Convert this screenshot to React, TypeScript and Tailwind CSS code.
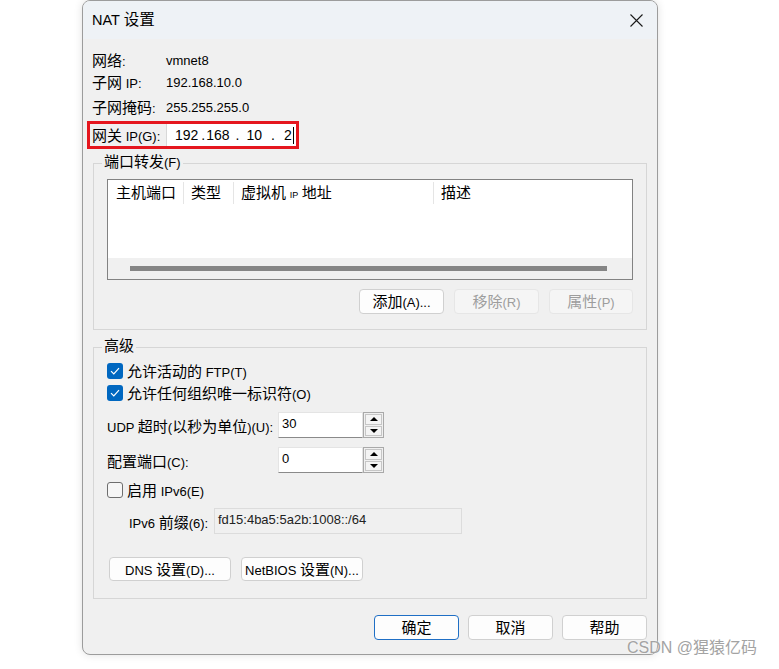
import React from "react";

// CJK runs are drawn a bit larger than the Latin text, as in the Windows dialog
const cjkRun = /([\u2E80-\u9FFF\uFF00-\uFFEF]+)/;

const T = ({ s }: { s: string }) => {
  return (
    <>
      {s.split(cjkRun).map((part, i) =>
        cjkRun.test(part) ? (
          <span key={i} className="text-[15px]">
            {part}
          </span>
        ) : (
          <span key={i}>{part}</span>
        )
      )}
    </>
  );
};

const Button = ({
  label,
  w,
  h = "h-[25px]",
  disabled = false,
  primary = false,
}: {
  label: string;
  w: string;
  h?: string;
  disabled?: boolean;
  primary?: boolean;
}) => {
  return (
    <div
      className={
        "flex items-center justify-center rounded-[4px] border " +
        w +
        " " +
        h +
        (disabled
          ? " border-[#e6e6e6] bg-[#f5f5f5] text-[#9d9d9d]"
          : primary
          ? " border-[#1f6fc5] bg-[#fdfdfd] text-black"
          : " border-[#d0d0d0] bg-[#fdfdfd] text-black")
      }
    >
      <span className="leading-none whitespace-nowrap">
        <T s={label} />
      </span>
    </div>
  );
};

const CheckBox = ({ checked, label }: { checked: boolean; label: string }) => {
  return (
    <div className="flex items-center h-[18px]">
      {checked ? (
        <div className="w-[16px] h-[16px] rounded-[3px] bg-[#0067c0] flex items-center justify-center">
          <svg width="10" height="8" viewBox="0 0 10 8" fill="none">
            <path d="M1 4.2 L3.8 7 L9 1.2" stroke="white" strokeWidth="1.2" />
          </svg>
        </div>
      ) : (
        <div className="w-[16px] h-[16px] rounded-[3px] border border-[#6e6e6e] bg-[#f6f6f6]" />
      )}
      <span className="ml-[4px] leading-none whitespace-nowrap">
        <T s={label} />
      </span>
    </div>
  );
};

const Spin = ({ value }: { value: string }) => {
  return (
    <div className="flex h-[26px]">
      <div className="w-[85px] bg-white border border-[#e4e4e4] border-b-[#8a8a8a] pl-[3px] pt-[4px] leading-none">
        {value}
      </div>
      <div className="w-[21px] border border-[#a9a9a9] p-px flex flex-col gap-px bg-[#f0f0f0]">
        <div className="flex-1 border border-[#c6c6c6] bg-[#f4f4f4] flex items-center justify-center">
          <div className="w-0 h-0 border-x-[4px] border-x-transparent border-b-[4px] border-b-black" />
        </div>
        <div className="flex-1 border border-[#c6c6c6] bg-[#f4f4f4] flex items-center justify-center">
          <div className="w-0 h-0 border-x-[4px] border-x-transparent border-t-[4px] border-t-black" />
        </div>
      </div>
    </div>
  );
};

const App = () => {
  return (
    <div className="relative w-[779px] h-[669px] bg-white overflow-hidden font-['Liberation_Sans','Noto_Sans_CJK_SC',sans-serif] text-[13px] text-black">
      <div className="ml-[82px] w-[576px] h-[655px] rounded-[8px] border border-[#9c9c9c] bg-[#f0f0f0] overflow-hidden shadow-[0_0_8px_rgba(0,0,0,0.12)] flex flex-col">
        {/* title bar */}
        <div className="h-[38px] bg-[#eef2f6] flex items-center justify-between pl-[9px] pr-[14px]">
          <span className="text-[14.5px] leading-none">
            NAT <span className="text-[15.5px]">设置</span>
          </span>
          <svg width="13" height="13" viewBox="0 0 13 13">
            <path d="M0.5 0.5 L12.5 12.5 M12.5 0.5 L0.5 12.5" stroke="#1a1a1a" strokeWidth="1.1" />
          </svg>
        </div>

        {/* network info */}
        <div className="flex flex-col pl-[9px]">
          <div className="mt-[10px] h-[22px] flex items-center">
            <span className="w-[74px] leading-none">
              <T s="网络:" />
            </span>
            <span className="leading-none">vmnet8</span>
          </div>
          <div className="h-[22px] flex items-center">
            <span className="w-[74px] leading-none">
              <T s="子网 IP:" />
            </span>
            <span className="leading-none">192.168.10.0</span>
          </div>
          <div className="mt-[3px] h-[22px] flex items-center">
            <span className="w-[74px] leading-none">
              <T s="子网掩码:" />
            </span>
            <span className="leading-none">255.255.255.0</span>
          </div>
          <div className="mt-[3px] -ml-[5px] w-[212px] h-[28px] border-[3px] border-[#e5161e] flex items-stretch">
            <div className="w-[76px] pl-[2px] flex items-center">
              <span className="leading-none whitespace-nowrap">
                <T s="网关 IP(G):" />
              </span>
            </div>
            <div className="flex-1 bg-white border-l border-[#d8d8d8] flex items-center text-[14px] leading-none">
              <span className="ml-[8px]">192</span>
              <span className="ml-[3px]">.</span>
              <span className="ml-[1px]">168</span>
              <span className="ml-[6px]">.</span>
              <span className="ml-[7px]">10</span>
              <span className="ml-[9px]">.</span>
              <span className="ml-[9px]">2</span>
              <span className="ml-[1px] w-px h-[17px] bg-black" />
            </div>
          </div>
        </div>

        {/* port forwarding */}
        <div className="relative mt-[14px] ml-[10px] w-[554px] h-[167px] border border-[#d6d6d6] pt-[15px] pl-[13px]">
          <span className="absolute -top-[10px] left-[8px] px-[2px] bg-[#f0f0f0] leading-none">
            <T s="端口转发(F)" />
          </span>
          <div className="w-[526px] h-[101px] border border-[#828282] bg-white flex flex-col">
            <div className="h-[25px] flex items-center leading-none">
              <div className="w-[75px] pl-[8px]">
                <T s="主机端口" />
              </div>
              <div className="w-px h-[22px] bg-[#e5e5e5]" />
              <div className="w-[49px] pl-[7px]">
                <T s="类型" />
              </div>
              <div className="w-px h-[22px] bg-[#e5e5e5]" />
              <div className="w-[199px] pl-[7px]">
                <span className="text-[15px]">虚拟机</span> <span className="text-[9px]">IP</span>{" "}
                <span className="text-[15px]">地址</span>
              </div>
              <div className="w-px h-[22px] bg-[#e5e5e5]" />
              <div className="pl-[7px]">
                <T s="描述" />
              </div>
            </div>
            <div className="flex-1" />
            <div className="h-[21px] bg-[#f0f0f0] flex items-center">
              <div className="ml-[22px] w-[477px] h-[5px] bg-[#858585]" />
            </div>
          </div>
          <div className="mt-[9px] w-[526px] flex justify-end gap-[10px]">
            <Button label="添加(A)..." w="w-[85px]" />
            <Button label="移除(R)" w="w-[85px]" disabled />
            <Button label="属性(P)" w="w-[84px]" disabled />
          </div>
        </div>

        {/* advanced */}
        <div className="relative mt-[17px] ml-[10px] w-[554px] h-[252px] border border-[#d6d6d6] pl-[13px] flex flex-col">
          <span className="absolute -top-[10px] left-[8px] px-[2px] bg-[#f0f0f0] leading-none">
            <T s="高级" />
          </span>
          <div className="mt-[14px]">
            <CheckBox checked label="允许活动的 FTP(T)" />
          </div>
          <div className="mt-[4px]">
            <CheckBox checked label="允许任何组织唯一标识符(O)" />
          </div>
          <div className="mt-[10px] flex items-center">
            <span className="w-[171px] leading-none pt-[3px] whitespace-nowrap">
              <T s="UDP 超时(以秒为单位)(U):" />
            </span>
            <Spin value="30" />
          </div>
          <div className="mt-[9px] flex items-center">
            <span className="w-[171px] leading-none pt-[3px] whitespace-nowrap">
              <T s="配置端口(C):" />
            </span>
            <Spin value="0" />
          </div>
          <div className="mt-[8px]">
            <CheckBox checked={false} label="启用 IPv6(E)" />
          </div>
          <div className="mt-[9px] flex items-center">
            <span className="w-[107px] pl-[22px] leading-none pt-[3px] whitespace-nowrap">
              <T s="IPv6 前缀(6):" />
            </span>
            <div className="w-[248px] h-[26px] border border-[#dcdcdc] bg-[#f0f0f0] pl-[3px] pt-[4px] leading-none text-[#222]">
              fd15:4ba5:5a2b:1008::/64
            </div>
          </div>
          <div className="mt-[23px] ml-[2px] flex gap-[10px]">
            <Button label="DNS 设置(D)..." w="w-[122px]" h="h-[24px]" />
            <Button label="NetBIOS 设置(N)..." w="w-[122px]" h="h-[24px]" />
          </div>
        </div>

        {/* dialog buttons */}
        <div className="mt-[16px] pr-[10px] flex justify-end gap-[9px]">
          <Button label="确定" w="w-[85px]" h="h-[25px]" primary />
          <Button label="取消" w="w-[85px]" h="h-[25px]" />
          <Button label="帮助" w="w-[85px]" h="h-[25px]" />
        </div>
      </div>

      {/* watermark */}
      <span className="absolute left-[627px] top-[640px] text-[16px] leading-none text-[#a3a3a3] font-['Liberation_Sans','Noto_Sans_CJK_SC',sans-serif] [text-shadow:0_0_2px_white]">
        CSDN @猩猿亿码
      </span>
    </div>
  );
};

export default App;
